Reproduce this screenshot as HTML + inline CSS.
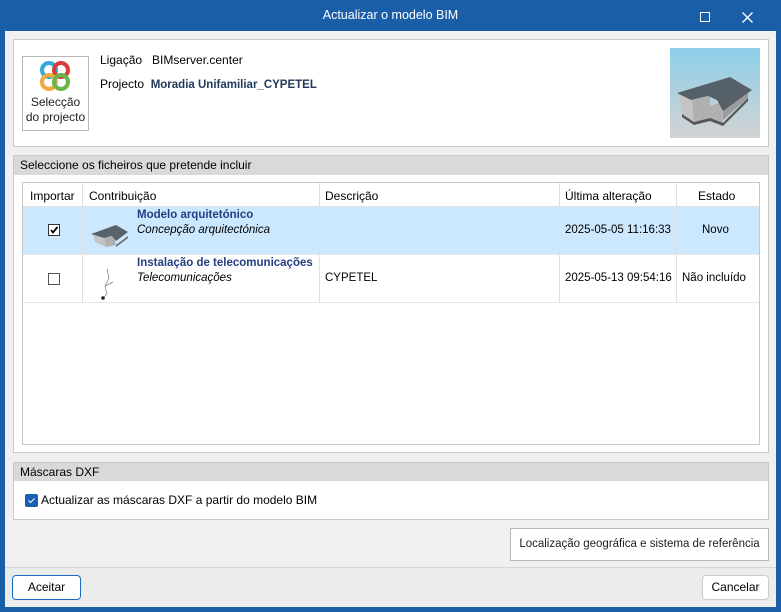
<!DOCTYPE html>
<html><head><meta charset="utf-8"><style>
*{margin:0;padding:0;box-sizing:border-box}
body{width:781px;height:612px;background:#1a5ea8;font-family:"Liberation Sans",sans-serif;font-size:11.5px;color:#000;position:relative;overflow:hidden}
.a{position:absolute}
.t{white-space:nowrap}
</style></head><body>
<div class="a t" style="left:0;top:8px;width:781px;text-align:center;color:#fff;font-size:12.5px">Actualizar o modelo BIM</div>
<div class="a" style="left:700px;top:12px;width:10px;height:10px;border:1.3px solid #fff"></div>
<svg class="a" style="left:742px;top:12px" width="11" height="11"><path d="M0.5 0.5L10.5 10.5M10.5 0.5L0.5 10.5" stroke="#fff" stroke-width="1.4"/></svg>
<div class="a" style="left:5px;top:31px;width:771px;height:536px;background:#f0f0f0"></div>
<div class="a" style="left:5px;top:567px;width:771px;height:40px;background:#ececec;border-top:1px solid #d6d6d6"></div>
<!-- top panel -->
<div class="a" style="left:13px;top:39px;width:756px;height:108px;background:#fff;border:1px solid #c8c8c8"></div>
<div class="a" style="left:22px;top:56px;width:67px;height:75px;border:1px solid #b8b8b8;background:#fff"></div>
<svg class="a" style="left:38px;top:59px" width="34" height="34" viewBox="0 0 34 34">
<circle cx="11" cy="11" r="7" fill="none" stroke="#2eaadc" stroke-width="4"/>
<circle cx="23" cy="11" r="7" fill="none" stroke="#d93a3a" stroke-width="4"/>
<circle cx="11" cy="23" r="7" fill="none" stroke="#f2a93b" stroke-width="4"/>
<circle cx="23" cy="23" r="7" fill="none" stroke="#6ab54a" stroke-width="4"/>
</svg>
<div class="a" style="left:22px;top:95px;width:67px;text-align:center;line-height:15px;color:#222;font-size:12px">Selecção<br>do projecto</div>
<div class="a t" style="left:100px;top:53px;font-size:12px">Ligação&nbsp;&nbsp; BIMserver.center</div>
<div class="a t" style="left:100px;top:77px;font-size:12px">Projecto&nbsp; <b style="color:#233a5c;font-size:11.5px">Moradia Unifamiliar_CYPETEL</b></div>
<div class="a" style="left:670px;top:48px;width:90px;height:90px;background:linear-gradient(#8ccfea,#d3d3d3)"></div>
<svg class="a" style="left:670px;top:48px" width="90" height="90">
<path d="M9 46L22 52L24 74L12 66Z" fill="#c4c4c4"/>
<path d="M22 52L40 48L40 58L52 54L53 75L40 70L24 74Z" fill="#b0b0b0"/>
<path d="M53 62L78 44L78 50L53 72Z" fill="#9c9c9c"/>
<path d="M12 66L24 74L40 70L53 75L78 50L78 53L53 78L40 73L24 77L12 69Z" fill="#555"/>
<path d="M7 45L60 29L82 42L53 63L47 52L38 48L21 52Z" fill="#556068"/>
</svg>
<!-- files section -->
<div class="a" style="left:13px;top:155px;width:756px;height:298px;background:#fff;border:1px solid #c8c8c8"></div>
<div class="a t" style="left:14px;top:156px;width:754px;height:19px;background:#d9d9d9;padding:2px 6px;font-size:12px">Seleccione os ficheiros que pretende incluir</div>
<div class="a" style="left:22px;top:182px;width:738px;height:263px;border:1px solid #c8c8c8;background:#fff"></div>
<div class="a" style="left:23px;top:183px;width:736px;height:24px;border-bottom:1px solid #e0e0e0"></div>
<div class="a" style="left:23px;top:207px;width:736px;height:47px;background:#cce8ff"></div>
<div class="a" style="left:23px;top:302px;width:736px;height:1px;background:#e8e8e8"></div>
<div class="a" style="left:23px;top:254px;width:736px;height:1px;background:#e8e8e8"></div>
<div class="a" style="left:82px;top:183px;width:1px;height:120px;background:#e0e0e0"></div>
<div class="a" style="left:319px;top:183px;width:1px;height:120px;background:#e0e0e0"></div>
<div class="a" style="left:559px;top:183px;width:1px;height:120px;background:#e0e0e0"></div>
<div class="a" style="left:676px;top:183px;width:1px;height:120px;background:#e0e0e0"></div>
<div class="a t" style="left:30px;top:189px;font-size:12px">Importar</div>
<div class="a t" style="left:89px;top:189px;font-size:12px">Contribuição</div>
<div class="a t" style="left:325px;top:189px;font-size:12px">Descrição</div>
<div class="a t" style="left:565px;top:189px;font-size:12px">Última alteração</div>
<div class="a t" style="left:698px;top:189px;font-size:12px">Estado</div>
<div class="a" style="left:48px;top:224px;width:12px;height:12px;border:1px solid #333;background:#fff"></div>
<svg class="a" style="left:49px;top:225px" width="10" height="10"><path d="M2 5L4 7.5L8.5 2" stroke="#000" stroke-width="1.8" fill="none"/></svg>
<svg class="a" style="left:90px;top:214px" width="42" height="34"><path d="M3 21L14 24L16 33L5 28Z" fill="#c4c4c4"/><path d="M14 24L24 22L26 31L16 33Z" fill="#b0b0b0"/><path d="M26 31L38 22L38 24L26 33Z" fill="#666"/><path d="M1 20L26 11L38 18L26 27L22 22L14 24Z" fill="#58626a"/></svg>
<div class="a t" style="left:137px;top:209px;font-weight:bold;color:#233f80">Modelo arquitetónico</div>
<div class="a t" style="left:137px;top:224px;font-style:italic">Concepção arquitectónica</div>
<div class="a t" style="left:565px;top:224px">2025-05-05 11:16:33</div>
<div class="a t" style="left:702px;top:224px">Novo</div>
<div class="a" style="left:48px;top:273px;width:12px;height:12px;border:1px solid #555;background:#fff"></div>
<svg class="a" style="left:95px;top:266px" width="30" height="36"><path d="M12 3L14 12L10 20L12 28M10 20L18 16M12 28L8 32" stroke="#888" stroke-width="0.8" fill="none"/><circle cx="8" cy="32" r="1.8" fill="#222"/></svg>
<div class="a t" style="left:137px;top:257px;font-weight:bold;color:#233f80">Instalação de telecomunicações</div>
<div class="a t" style="left:137px;top:272px;font-style:italic">Telecomunicações</div>
<div class="a t" style="left:325px;top:272px">CYPETEL</div>
<div class="a t" style="left:565px;top:272px">2025-05-13 09:54:16</div>
<div class="a t" style="left:682px;top:272px">Não incluído</div>
<!-- DXF -->
<div class="a" style="left:13px;top:462px;width:756px;height:58px;background:#fff;border:1px solid #c8c8c8"></div>
<div class="a t" style="left:14px;top:463px;width:754px;height:18px;background:#d9d9d9;padding:2px 6px;font-size:12px">Máscaras DXF</div>
<div class="a" style="left:25px;top:494px;width:13px;height:13px;border-radius:2px;background:#1a5fb4"></div>
<svg class="a" style="left:25px;top:494px" width="13" height="13"><path d="M3.5 6.5L5.5 8.5L9.5 4.5" stroke="#fff" stroke-width="1" fill="none"/></svg>
<div class="a t" style="left:41px;top:493px;font-size:12px">Actualizar as máscaras DXF a partir do modelo BIM</div>
<div class="a t" style="left:510px;top:528px;width:259px;height:33px;border:1px solid #b8b8b8;background:#fff;text-align:center;line-height:31px;color:#222">Localização geográfica e sistema de referência</div>
<div class="a t" style="left:12px;top:575px;width:69px;height:25px;border:1px solid #1a6fc0;border-radius:4px;background:#fff;text-align:center;line-height:23px;font-size:12px">Aceitar</div>
<div class="a t" style="left:702px;top:575px;width:67px;height:25px;border:1px solid #ccc;border-radius:4px;background:#fff;text-align:center;line-height:23px;font-size:12px">Cancelar</div>
</body></html>
